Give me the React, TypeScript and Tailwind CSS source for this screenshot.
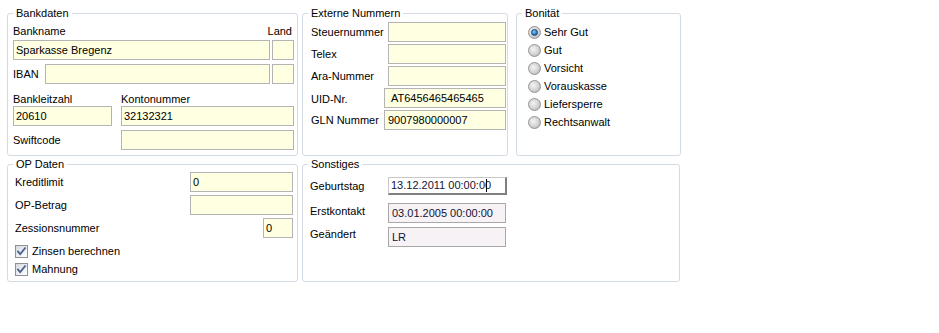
import React from 'react';

const font = "font-['Liberation_Sans',Arial,sans-serif] text-[11px] leading-[13px] text-black";

function Box({
  value = '',
  className = '',
}: {
  value?: string;
  className?: string;
}) {
  return (
    <div
      className={`h-[20px] border border-[#b4b4b4] bg-[#ffffe1] pl-[2px] flex items-center whitespace-nowrap overflow-hidden ${className}`}
    >
      {value}
    </div>
  );
}

function Group({
  title,
  className = '',
  children,
}: {
  title: string;
  className?: string;
  children: React.ReactNode;
}) {
  return (
    <fieldset className={`border border-[#d3dce4] rounded-[3px] ${className}`}>
      <legend className="ml-[5px] px-[3px] leading-[13px]">{title}</legend>
      {children}
    </fieldset>
  );
}

function Radio({ label, checked = false }: { label: string; checked?: boolean }) {
  return (
    <div className="h-[18px] flex items-center gap-[3px]">
      <span className="w-[13px] h-[13px] rounded-full border border-[#949494] bg-[radial-gradient(circle_at_40%_40%,#f4f4f4,#d2d2d2_55%,#a9a9a9)] flex items-center justify-center">
        {checked && (
          <span className="w-[7px] h-[7px] rounded-full border border-[#174a78] bg-[radial-gradient(circle_at_40%_35%,#8fcaf8,#2a78bd_60%,#16507f)]" />
        )}
      </span>
      <span>{label}</span>
    </div>
  );
}

function Check({ label }: { label: string }) {
  return (
    <div className="h-[18px] flex items-center gap-[4px]">
      <span className="w-[13px] h-[13px] border border-[#8f9090] bg-gradient-to-br from-[#d6dae0] to-[#ffffff] flex items-center justify-center">
        <svg width="11" height="11" viewBox="0 0 11 11">
          <path
            d="M2 5.5 L4.2 8 L9 2.2"
            fill="none"
            stroke="#4a5f8c"
            strokeWidth="1.8"
            strokeLinecap="square"
          />
        </svg>
      </span>
      <span>{label}</span>
    </div>
  );
}

export default function App() {
  return (
    <div className={`w-[939px] h-[333px] bg-white pt-[7px] pl-[7px] ${font}`}>
      {/* Top row */}
      <div className="flex items-start">
        <Group title="Bankdaten" className="w-[291px] h-[149px]">
          <div className="pl-[5px] pr-[3px] pt-[5px]">
            <div className="flex justify-between h-[13px]">
              <span>Bankname</span>
              <span className="mr-[2px]">Land</span>
            </div>
            <div className="mt-[2px] flex gap-[2px]">
              <Box value="Sparkasse Bregenz" className="flex-1 pl-[2px]" />
              <Box className="w-[22px]" />
            </div>
            <div className="mt-[4px] flex gap-[2px] items-center">
              <span className="w-[30px]">IBAN</span>
              <Box className="flex-1" />
              <Box className="w-[22px]" />
            </div>
            <div className="mt-[9px] grid grid-cols-[99px_1fr] gap-x-[9px]">
              <span className="h-[13px]">Bankleitzahl</span>
              <span className="h-[13px]">Kontonummer</span>
              <Box value="20610" />
              <Box value="32132321" />
            </div>
            <div className="mt-[4px] grid grid-cols-[99px_1fr] gap-x-[9px] items-center">
              <span>Swiftcode</span>
              <Box />
            </div>
          </div>
        </Group>

        <Group title="Externe Nummern" className="ml-[4px] w-[206px] h-[149px]">
          <div className="pl-[8px] pr-[1px] pt-[2px] flex flex-col gap-[2px]">
            <div className="flex items-center justify-between">
              <span>Steuernummer</span>
              <Box className="w-[118px]" />
            </div>
            <div className="flex items-center justify-between">
              <span>Telex</span>
              <Box className="w-[118px]" />
            </div>
            <div className="flex items-center justify-between">
              <span>Ara-Nummer</span>
              <Box className="w-[118px]" />
            </div>
            <div className="flex items-center justify-between">
              <span className="pt-[3px]">UID-Nr.</span>
              <Box value="AT6456465465465" className="w-[122px] pl-[6px]" />
            </div>
            <div className="flex items-center justify-between">
              <span>GLN Nummer</span>
              <Box value="9007980000007" className="w-[122px] pl-[3px]" />
            </div>
          </div>
        </Group>

        <Group title="Bonität" className="ml-[8px] w-[165px] h-[149px]">
          <div className="pl-[11px] pt-[3px]">
            <Radio label="Sehr Gut" checked />
            <Radio label="Gut" />
            <Radio label="Vorsicht" />
            <Radio label="Vorauskasse" />
            <Radio label="Liefersperre" />
            <Radio label="Rechtsanwalt" />
          </div>
        </Group>
      </div>

      {/* Bottom row */}
      <div className="mt-[2px] flex items-start">
        <Group title="OP Daten" className="w-[291px] h-[124px]">
          <div className="pl-[7px] pr-[4px] pt-[1px]">
            <div className="flex flex-col gap-[3px]">
              <div className="flex items-center justify-between">
                <span>Kreditlimit</span>
                <Box value="0" className="w-[103px]" />
              </div>
              <div className="flex items-center justify-between">
                <span>OP-Betrag</span>
                <Box className="w-[103px]" />
              </div>
              <div className="flex items-center justify-between">
                <span>Zessionsnummer</span>
                <Box value="0" className="w-[30px]" />
              </div>
            </div>
            <div className="mt-[4px]">
              <Check label="Zinsen berechnen" />
              <Check label="Mahnung" />
            </div>
          </div>
        </Group>

        <Group title="Sonstiges" className="ml-[4px] w-[378px] h-[124px]">
          <div className="pl-[7px] pt-[6px]">
            <div className="flex items-start">
              <span className="w-[78px] pt-[3px]">Geburtstag</span>
              <div className="w-[119px] h-[18px] border-t border-l border-[#c8c8c8] border-r-2 border-b-2 border-r-[#7f7f7f] border-b-[#7f7f7f] bg-white pl-[2px] flex items-center whitespace-nowrap text-[#141432]">
                13.12.2011 00:00:0
                <span className="inline-block w-px h-[13px] bg-black -mr-[2px] ml-[1px]" />
                0
              </div>
            </div>
            <div className="mt-[8px] flex items-start">
              <span className="w-[78px] pt-[2px]">Erstkontakt</span>
              <div className="w-[118px] h-[20px] border border-[#a8a8a8] bg-[#f6f2f6] pl-[3px] flex items-center whitespace-nowrap text-[#141432]">
                03.01.2005 00:00:00
              </div>
            </div>
            <div className="mt-[4px] flex items-start">
              <span className="w-[78px] pt-[1px]">Geändert</span>
              <div className="w-[118px] h-[20px] border border-[#a8a8a8] bg-[#f6f2f6] pl-[3px] flex items-center whitespace-nowrap text-[#141432]">
                LR
              </div>
            </div>
          </div>
        </Group>
      </div>
    </div>
  );
}
